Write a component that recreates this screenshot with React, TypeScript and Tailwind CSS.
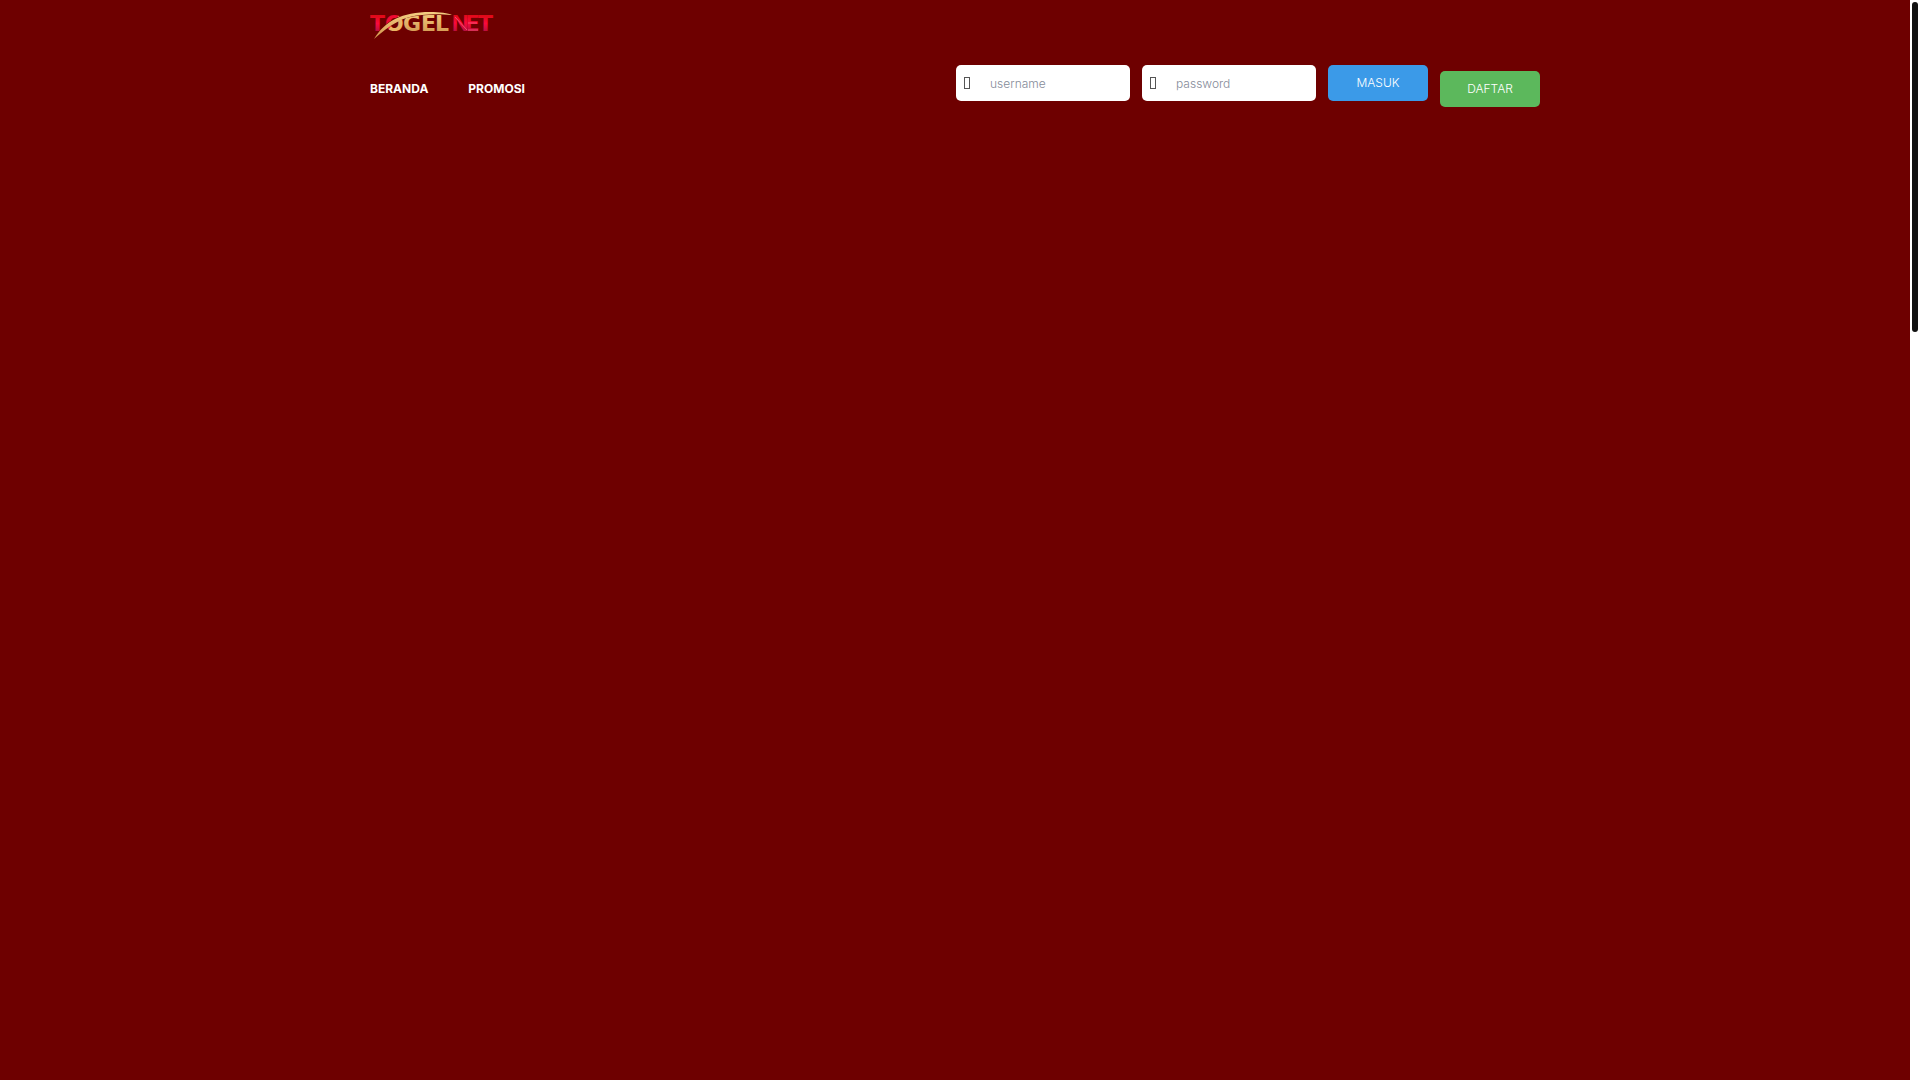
import React from "react";

const navItems = [
  { id: "beranda", label: "BERANDA" },
  { id: "promosi", label: "PROMOSI" },
];

const fields = [
  { id: "username", type: "text" },
  { id: "password", type: "password" },
];

const Logo: React.FC = () => (
  <svg viewBox="0 0 124 30" className="w-[124px] h-[30px]" role="img" aria-label="Togelnet">
    <defs>
      <linearGradient id="gold" x1="0" y1="0" x2="0" y2="1">
        <stop offset="0" stopColor="#f5cf82" />
        <stop offset="1" stopColor="#cf924c" />
      </linearGradient>
      <linearGradient id="red" x1="0" y1="0" x2="0" y2="1">
        <stop offset="0.2" stopColor="#e00a18" />
        <stop offset="0.5" stopColor="#fa0a3c" />
        <stop offset="0.85" stopColor="#b01040" />
      </linearGradient>
      <linearGradient id="ring" x1="0" y1="0" x2="1" y2="1">
        <stop offset="0.44" stopColor="#f00a32" />
        <stop offset="0.48" stopColor="#e9b566" />
      </linearGradient>
    </defs>
    <g fontFamily="'DejaVu Sans', sans-serif" fontWeight="700" fontSize="22">
      <text x="0" y="21" fill="url(#red)">T</text>
      <text x="15" y="21" fill="url(#ring)">O</text>
      <text x="33" y="21" fill="url(#gold)">G</text>
      <text x="51" y="21" fill="url(#gold)">E</text>
      <text x="65" y="21" fill="url(#gold)">L</text>
      <text x="82" y="21" fill="url(#red)" fontFamily="Inter, sans-serif">N</text>
      <text x="96" y="21" fill="url(#red)" fontFamily="Inter, sans-serif">E</text>
      <text x="108" y="21" fill="url(#red)">T</text>
    </g>
    <path d="M85 7 L97 20 M98 13 H107 M98 20 H108" fill="none" stroke="#f0506e" strokeWidth="1" />
    <path d="M4 29 C16 10 32 2 60 2 C70 2 78 4 82 6 C70 4 62 4 52 5 C30 6 18 15 4 29Z" fill="#6e0000" stroke="#6e0000" strokeWidth="1" />
    <path d="M4 29 C15 11 32 2 60 2 C70 2 78 3 82 5 C70 4 62 4 52 5 C33 6 20 15 4 29Z" fill="url(#gold)" />
  </svg>
);

export default function App() {
  return (
    <div className="flex min-h-screen bg-[#6e0000] font-[Inter,sans-serif] text-xs">
      <div className="flex-1 min-w-0">
        <header className="max-w-[1200px] mx-auto px-[15px] pt-[10px]">
          <a href="#beranda" className="block w-fit">
            <Logo />
          </a>

          <div className="flex flex-wrap items-start justify-between gap-3 pt-[25px]">
            <nav className="flex gap-10 pt-4 font-bold leading-4 text-white">
              {navItems.map(item => (
                <a key={item.id} href={`#${item.id}`}>{item.label}</a>
              ))}
            </nav>

            <div className="flex flex-wrap gap-3 font-light">
              <form className="flex flex-wrap gap-3" onSubmit={e => e.preventDefault()}>
                {fields.map(field => (
                  <label key={field.id} className="flex items-center w-[174px] h-9 px-2 gap-5 rounded-[5px] bg-white">
                    <span className="w-[6px] h-3 border border-[#555] shrink-0" />
                    <input
                      id={field.id}
                      type={field.type}
                      placeholder={field.id}
                      aria-label={field.id}
                      className="w-full min-w-0 h-9 outline-none text-gray-700 placeholder:text-[#858b99]"
                    />
                  </label>
                ))}
                <button type="submit" className="w-[100px] h-9 rounded-[5px] bg-[#3b9ae8] text-white">
                  MASUK
                </button>
              </form>
              <a href="#daftar" className="flex items-center justify-center w-[100px] h-9 mt-1.5 rounded-[5px] bg-[#5cb85c] text-white">
                DAFTAR
              </a>
            </div>
          </div>
        </header>
      </div>

      {/* Scroll track */}
      <div className="w-[10px] p-0.5 bg-white shrink-0">
        <div className="h-[330px] rounded-full bg-[#111]" />
      </div>
    </div>
  );
}
